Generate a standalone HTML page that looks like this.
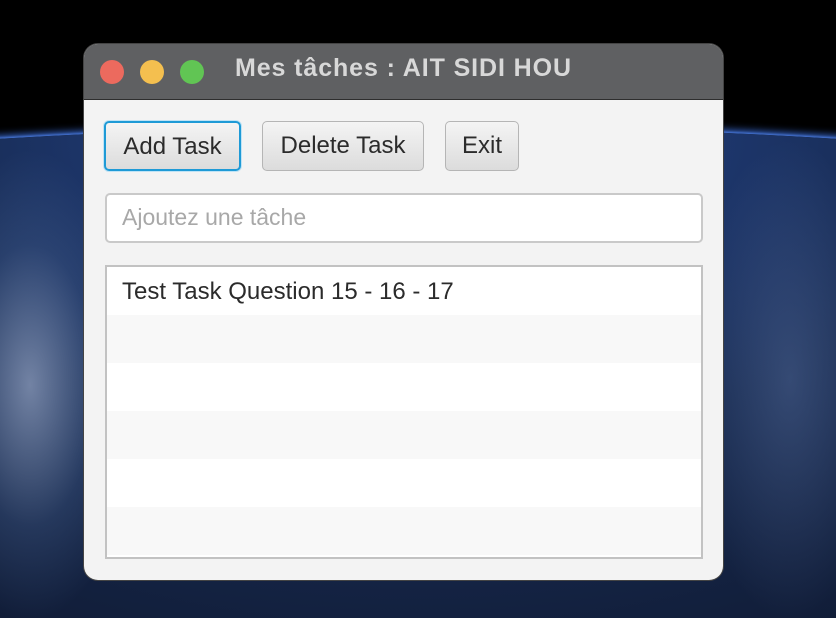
<!DOCTYPE html>
<html><head><meta charset="utf-8"><style>
*{box-sizing:border-box;margin:0;padding:0}
html,body{width:836px;height:618px;overflow:hidden}
body{background:#000;font-family:"Liberation Sans",sans-serif}
.bg{position:absolute;left:0;top:0;width:836px;height:618px;overflow:hidden}
.earth{position:absolute;left:-1782px;top:126px;width:4400px;height:1400px;border-radius:50%;
background:radial-gradient(ellipse 20% 40% at 50% 0%, #2a4a8a 0%, #1e3870 30%, #172a50 60%, #111d38 100%);
box-shadow:0 -3px 8px #3a6ad0, 0 -1px 2px #6d9cf0}
.cl{position:absolute;left:-80px;top:150px;width:220px;height:470px;background:radial-gradient(closest-side,rgba(190,205,235,.55),rgba(90,120,170,.25) 60%,rgba(0,0,0,0) 100%)}
.cr{position:absolute;left:690px;top:140px;width:200px;height:480px;background:radial-gradient(closest-side,rgba(110,135,185,.35),rgba(0,0,0,0) 100%)}
.win{position:absolute;left:84px;top:44px;width:639px;height:536px;border-radius:14px;background:#f3f3f3;overflow:hidden;box-shadow:0 0 0 1px #444}
.tb{height:56px;background:#5f6062;border-bottom:1px solid #2e2e2e;position:relative}
.d{position:absolute;top:16px;width:24px;height:24px;border-radius:50%}
.t{position:absolute;left:151px;top:10px;font-weight:bold;font-size:25px;letter-spacing:0.9px;color:#d8d8d8}
.btn{position:absolute;top:77px;height:50px;border:1px solid #b5b5b5;border-radius:5px;background:linear-gradient(#f4f4f4,#dcdcdc);font-size:24px;color:#2b2b2b;text-align:center;line-height:48px}
.fld{position:absolute;left:21px;top:149px;width:598px;height:50px;border:2px solid #c9c9c9;border-radius:5px;background:#fff;font-size:23px;color:#a8a8a8;padding-left:15px;line-height:45px}
.list{position:absolute;left:21px;top:221px;width:598px;height:294px;border:2px solid #c2c2c2;background:#fff}
.r{height:48px}.r:nth-child(even){background:#f8f8f8}
.r1{font-size:24px;color:#2b2b2b;padding-left:15px;line-height:50px}
</style></head><body>
<div class="bg"><div class="earth"></div><div class="cl"></div><div class="cr"></div></div>
<div class="win">
<div class="tb">
<div class="d" style="left:16px;background:#ec6a5e"></div>
<div class="d" style="left:56px;background:#f4bf4f"></div>
<div class="d" style="left:96px;background:#61c554"></div>
<div class="t">Mes tâches : AIT SIDI HOU</div>
</div>
<div class="btn" style="left:20px;width:137px;border:2px solid #1e9ad6;box-shadow:0 0 0 1px #bfe3f5">Add Task</div>
<div class="btn" style="left:178px;width:162px">Delete Task</div>
<div class="btn" style="left:361px;width:74px">Exit</div>
<div class="fld">Ajoutez une tâche</div>
<div class="list"><div class="r r1">Test Task Question 15 - 16 - 17</div><div class="r"></div><div class="r"></div><div class="r"></div><div class="r"></div><div class="r"></div></div>
</div>
</body></html>
